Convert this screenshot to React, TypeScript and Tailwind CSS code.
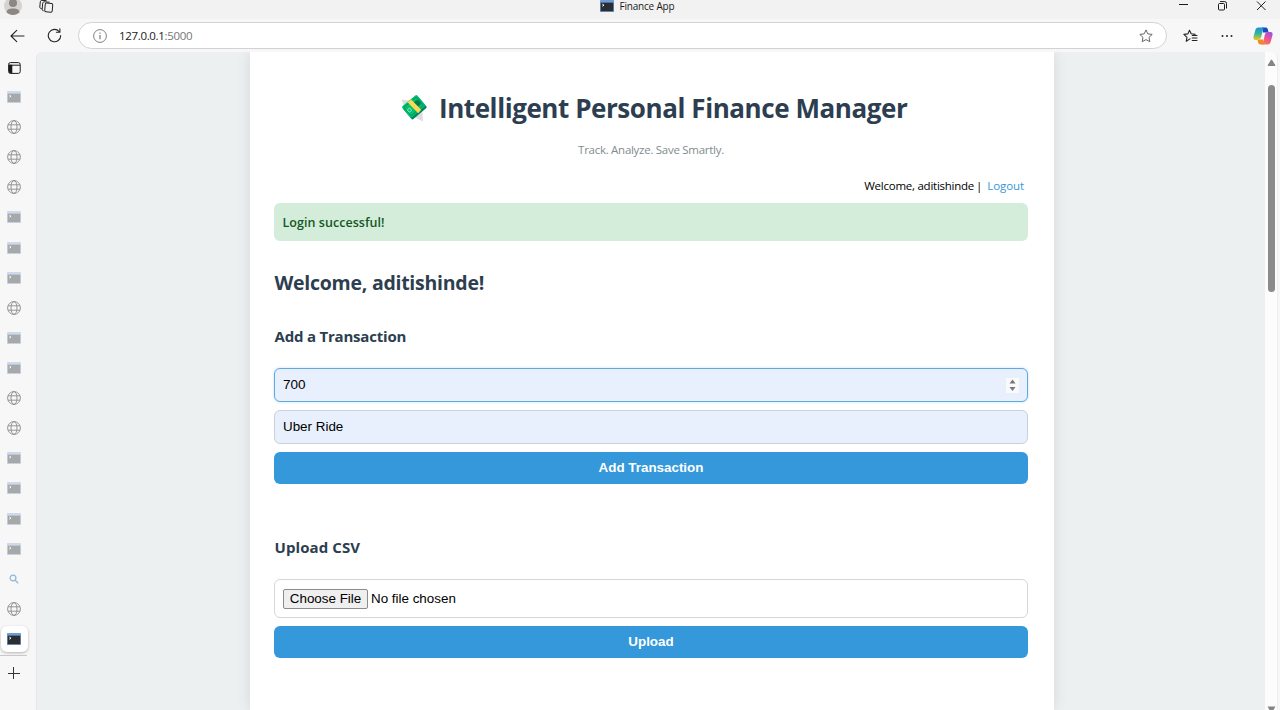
import React from "react";

type TabKind = "term" | "globe" | "search";

const tabs: TabKind[] = [
  "term", "globe", "globe", "globe", "term", "term", "term", "globe", "term",
  "term", "globe", "globe", "term", "term", "term", "term", "search", "globe",
];

function Terminal({ faded = false }: { faded?: boolean }) {
  return (
    <svg width="14" height="12" viewBox="0 0 14 12" className={faded ? "opacity-45" : ""}>
      <rect width="14" height="12" rx="0.5" fill={faded ? "#9db8e0" : "#6f9bd8"} />
      <rect x="0.7" y="2.6" width="12.6" height="8.6" fill={faded ? "#45494d" : "#2b2e31"} />
      <path d="M2.4 4.2 4 5.2 2.4 6.2" fill="none" stroke="#fff" strokeWidth="1" />
    </svg>
  );
}

function Globe() {
  return (
    <svg width="14" height="14" viewBox="0 0 14 14" fill="none" stroke="#8b8b8b" strokeWidth="0.9">
      <circle cx="7" cy="7" r="6.4" />
      <ellipse cx="7" cy="7" rx="3" ry="6.4" />
      <path d="M1 4.8h12M1 9.2h12" />
    </svg>
  );
}

function SearchGlyph() {
  return (
    <svg width="10" height="10" viewBox="0 0 10 10" fill="none" stroke="#8fb9dc" strokeWidth="1.3">
      <circle cx="4" cy="4" r="2.9" />
      <path d="M6.2 6.2 9.2 9.2" />
    </svg>
  );
}

function Money() {
  return (
    <svg width="27" height="28" viewBox="0 0 27 28">
      <path d="M.5 5.500 12 7 4 15ZM22 27.500 17 25 12 22 21 14Z" fill="#dcdde0" />
      <g transform="rotate(-40 13.5 13)">
        <rect x="3.500" y="6.500" width="19.500" height="15" rx="1.5" fill="#008463" />
        <rect x="3.500" y="4.700" width="19.500" height="14.500" rx="1.5" fill="#00c26f" />
        <rect x="5.200" y="6.500" width="16" height="11" fill="none" stroke="#00935c" strokeWidth="0.9" />
        <circle cx="18" cy="12" r="3.200" fill="#007a55" />
        <circle cx="7.600" cy="12.200" r="1.8" fill="none" stroke="#8eeab6" strokeWidth="0.9" />
      </g>
      <path d="m6.500 8.300 3.700-2.800 10 10.200-3 3.600Z" fill="#fcd953" />
    </svg>
  );
}

function Copilot() {
  return (
    <svg width="20" height="18" viewBox="0 0 20 18">
      <defs>
        <linearGradient id="cpA" x1="0" y1="0" x2="0" y2="1">
          <stop offset="0" stopColor="#1b8fe0" />
          <stop offset="0.5" stopColor="#35b79a" />
          <stop offset="1" stopColor="#f5c51c" />
        </linearGradient>
        <linearGradient id="cpB" x1="0.7" y1="0" x2="0.2" y2="1">
          <stop offset="0" stopColor="#a24fe0" />
          <stop offset="0.5" stopColor="#ee5490" />
          <stop offset="1" stopColor="#fb8045" />
        </linearGradient>
      </defs>
      <path d="M9 .6h3.900c1.100 0 1.600.8 1.900 1.800L15.600 5.500H10Z" fill="#1d49c5" />
      <path d="M11 17.400H7.100c-1.100 0-1.600-.8-1.900-1.800L4.400 12.500H10Z" fill="#f08a22" />
      <path d="M5.300.6h6.200c-1.200.3-1.400 1.400-1.700 2.500L8.300 9.800c-.5 2-1.500 3.200-3.300 3.200H2.500C.6 13 .1 11.500.6 9.600L2.300 3.200C2.800 1.500 3.700.6 5.300.6Z" fill="url(#cpA)" />
      <path d="M14.700 17.400H8.500c1.200-.3 1.400-1.400 1.700-2.500L11.700 8.200C12.200 6.200 13.200 5 15 5h2.500c1.900 0 2.400 1.500 1.900 3.400l-1.700 6.400c-.5 1.700-1.400 2.600-3 2.600Z" fill="url(#cpB)" />
    </svg>
  );
}

function Star({ list = false }: { list?: boolean }) {
  return list ? (
    <svg width="15" height="14" viewBox="0 0 15 14" fill="none" stroke="#242424" strokeWidth="1.1" strokeLinejoin="round" strokeLinecap="round">
      <path d="M7 9.900 3.200 12.300 4 8.300.9 5.400l4-.5L6.500 1.200l1.700 3.600 3.900.6M9.200 6.500h4.800M9.200 9h4.800M9.200 11.500h4.800" />
    </svg>
  ) : (
    <svg width="14" height="14" viewBox="0 0 14 14" fill="none" stroke="#686868" strokeWidth="1" strokeLinejoin="round">
      <path d="m7 .9 1.800 4 4.400.5-3.200 3 .8 4.300L7 10.600l-3.800 2.100.8-4.300-3.200-3 4.400-.5Z" />
    </svg>
  );
}

function TitleBar() {
  return (
    <div className="flex h-[19px] shrink-0 items-start justify-between bg-[#f2f2f2]">
      <div className="flex w-[200px] pl-[4px]">
        <svg width="18" height="15" viewBox="0 0 18 15">
          <circle cx="9" cy="6" r="9" fill="#d5d2cf" />
          <circle cx="9" cy="3" r="4" fill="#8b8784" />
          <path d="M2.500 12.300C3 9.500 5 8.600 9 8.600s6 .9 6.500 3.700C13.500 14.200 11.500 15 9 15s-4.500-.8-6.500-2.700Z" fill="#8b8784" />
        </svg>
        <svg className="ml-[17px]" width="15" height="13" viewBox="0 0 15 13" fill="none" stroke="#242424" strokeWidth="1" strokeLinejoin="round">
          <rect x="6" y="3.200" width="7.500" height="8.800" rx="1.400" transform="rotate(5 9.500 7.500)" />
          <path d="M4.600 10.800 3.600 10.500Q3 10.200 3.200 9.200L3.700 3.200Q3.900 1.800 5.200 1.800L10.500 2.200M2.800 8.800 1.500 8.300Q.7 7.900.8 7L1.300 1.800Q1.500.5 2.800.4L7.500.6" />
        </svg>
      </div>
      <div className="ml-[75px] flex h-[12px] w-[78px] items-center">
        <Terminal />
        <span className="ml-[6px] whitespace-nowrap font-['Open_Sans',sans-serif] text-[10px] leading-[12px] tracking-[-0.200px] text-[#1a1a1a]">Finance App</span>
      </div>
      <div className="flex w-[278px] justify-end pr-[14px]">
        <svg width="88" height="12" viewBox="0 0 88 12" fill="none" stroke="#1c1c1c" strokeWidth="1">
          <path d="M1 4.500h9" />
          <rect x="40.500" y="3.500" width="6" height="6.500" rx="1" />
          <path d="M42 1.600h4.800q1.700 0 1.700 1.700V8.500M79 1.500l8.500 8.500M87.500 1.500 79 10" />
        </svg>
      </div>
    </div>
  );
}

function Toolbar() {
  return (
    <div className="flex h-[33px] shrink-0 items-center bg-[#f7f7f7]">
      <svg className="ml-[10px]" width="15" height="14" viewBox="0 0 15 14" fill="none" stroke="#242424" strokeWidth="1.100" strokeLinecap="round" strokeLinejoin="round">
        <path d="M14 7H1M6.700 1.400 1 7l5.700 5.600" />
      </svg>
      <svg className="ml-[22px]" width="15" height="15" viewBox="0 0 15 15" fill="none" stroke="#242424" strokeWidth="1.100" strokeLinecap="round" strokeLinejoin="round">
        <path d="M13.700 7.500A6.200 6.200 0 1 1 12.200 3.500M12.900.8V4.300H9.400" />
      </svg>
      <div className="ml-[16px] flex h-[27px] w-[1089px] items-center rounded-full border border-[#d2d2d2] bg-white pl-[14px] pr-[13px]">
        <svg width="14" height="14" viewBox="0 0 14 14" fill="none" stroke="#707070" strokeWidth="0.900">
          <circle cx="7" cy="7" r="6.400" />
          <path d="M7 6v4.200M7 3.500v1.200" strokeWidth="1.100" />
        </svg>
        <span className="ml-[12px] flex-1 font-['Open_Sans',sans-serif] text-[11.500px] tracking-[-0.330px] text-[#1a1a1a]">
          127.0.0.1<span className="text-[#767676]">:5000</span>
        </span>
        <Star />
      </div>
      <div className="ml-[16px] flex"><Star list /></div>
      <svg className="ml-[23px]" width="12" height="4" viewBox="0 0 12 4" fill="#242424">
        <circle cx="1.500" cy="2" r="1" /><circle cx="6" cy="2" r="1" /><circle cx="10.500" cy="2" r="1" />
      </svg>
      <div className="ml-[20px]"><Copilot /></div>
    </div>
  );
}

function Sidebar() {
  return (
    <aside className="flex w-[36px] shrink-0 flex-col bg-[#f7f7f7]">
      <div className="flex h-[30px] items-center pt-[2px] pl-[8px]">
        <svg width="13" height="12" viewBox="0 0 13 12" fill="none" stroke="#1b1b1b" strokeWidth="1">
          <rect x="0.600" y="0.600" width="11.600" height="10.800" rx="1.800" />
          <path d="M4 3.200h8" />
          <path d="M1 2.500h3v8.700H2L1 10Z" fill="#1b1b1b" stroke="none" />
          <path d="M3.800 3v8" />
        </svg>
      </div>
      {tabs.map((kind, i) => (
        <div key={i} className="flex h-[30.120px] w-[28px] shrink-0 items-center justify-center">
          {kind === "term" ? <Terminal faded /> : kind === "globe" ? <Globe /> : <SearchGlyph />}
        </div>
      ))}
      <div className="mt-[2px] ml-[1px] flex h-[26px] w-[27px] shrink-0 items-center justify-center rounded-[6px] bg-white pr-px shadow-[0_1px_3px_rgba(0,0,0,0.28)]">
        <Terminal />
      </div>
      <div className="mt-[3px] h-px w-[27px] shrink-0 bg-[#c9c9c9]" />
      <svg className="mt-[11px] ml-[8px] shrink-0" width="12" height="12" viewBox="0 0 12 12" stroke="#333" strokeWidth="1">
        <path d="M0 6.500h12M5.500 0v12" />
      </svg>
    </aside>
  );
}

function Card() {
  return (
    <main className="flex w-[804px] shrink-0 flex-col bg-white pr-[26px] pl-[24px] font-['Open_Sans','Noto_Sans',sans-serif] shadow-[0_0_13px_rgba(0,0,0,0.1)]">
      <h1 className="mt-[36px] flex h-[40px] shrink-0 items-center pl-[127px] text-[26px] font-bold text-[#2c3e50]">
        <Money />
        <span className="ml-[11px] pt-px whitespace-nowrap tracking-[-0.430px]">Intelligent Personal Finance Manager</span>
      </h1>
      <p className="mt-[12px] h-[20px] shrink-0 text-center text-[11.500px] leading-[20px] tracking-[-0.280px] text-[#7f8c8d]">Track. Analyze. Save Smartly.</p>
      <div className="mt-[16px] flex h-[20px] shrink-0 justify-end pr-[4px] text-[11.500px] leading-[20px] text-black">
        <span className="tracking-[-0.250px]">Welcome, aditishinde</span>
        <span className="ml-[2px]">|</span>
        <a className="ml-[5px] tracking-[-0.100px] text-[#3498db]">Logout</a>
      </div>
      <div className="mt-[7px] flex h-[38px] shrink-0 items-center rounded-[6px] bg-[#d4edda] pt-[2px] pl-[8.500px] text-[12.500px] font-semibold tracking-[0.050px] text-[#155724]">Login successful!</div>
      <h2 className="mt-[27px] h-[30px] shrink-0 pl-[0.500px] text-[19.500px] font-bold leading-[30px] tracking-[-0.260px] text-[#2c3e50]">Welcome, aditishinde!</h2>
      <h3 className="mt-[28px] h-[20px] shrink-0 pl-[0.500px] text-[15px] font-bold leading-[20px] tracking-[-0.200px] text-[#2c3e50]">Add a Transaction</h3>
      <div className="mt-[22px] flex h-[34px] shrink-0 items-center justify-between rounded-[6px] border border-[#5fa9dd] bg-[#e8f0fe] pr-[8px] pl-[8px] font-['Liberation_Sans',sans-serif] text-[13.500px] text-black shadow-[0_0_3px_rgba(52,152,219,0.3)]">
        <span>700</span>
        <svg width="13" height="15" viewBox="0 0 13 15">
          <rect width="13" height="15" fill="#fafafa" />
          <path d="M3.500 5.500 6.500 1.500l3 4ZM3.500 9l3 4 3-4Z" fill="#777" />
        </svg>
      </div>
      <div className="mt-[8px] flex h-[34px] shrink-0 items-center rounded-[6px] border border-[#ccd0d8] bg-[#e8f0fe] pl-[8px] font-['Liberation_Sans',sans-serif] text-[13.400px] text-black">Uber Ride</div>
      <button className="mt-[8px] h-[32px] shrink-0 rounded-[6px] bg-[#3498db] font-['Liberation_Sans',sans-serif] text-[13.400px] font-bold text-white">Add Transaction</button>
      <h3 className="mt-[53px] h-[20px] shrink-0 pl-[0.500px] text-[15px] font-bold leading-[20px] tracking-[0.100px] text-[#2c3e50]">Upload CSV</h3>
      <div className="mt-[22px] flex h-[39px] shrink-0 items-center rounded-[6px] border border-[#d6d6d6] pt-px pl-[8px] font-['Liberation_Sans',sans-serif] text-[13.400px] text-black">
        <span className="flex h-[20px] w-[85px] items-center justify-center whitespace-nowrap rounded-[2px] border border-[#8c8c8c] bg-[#efefef]">Choose File</span>
        <span className="ml-[3px]">No file chosen</span>
      </div>
      <button className="mt-[8px] h-[32px] shrink-0 rounded-[6px] bg-[#3498db] font-['Liberation_Sans',sans-serif] text-[13.400px] font-bold text-white">Upload</button>
    </main>
  );
}

export default function App() {
  return (
    <div className="flex h-[710px] w-[1280px] flex-col overflow-hidden bg-[#f7f7f7]">
      <TitleBar />
      <Toolbar />
      <div className="flex min-h-0 flex-1">
        <Sidebar />
        <div className="flex min-w-0 flex-1 overflow-hidden rounded-tl-[6px] border-l border-[#e5e7e8] bg-[#ecf0f1] pl-[213px]">
          <Card />
        </div>
        <div className="mr-[2px] flex w-[13px] shrink-0 flex-col items-center rounded-tr-[6px] border-r border-[#eeeeee] bg-[#fcfcfc]">
          <svg className="mt-[7px] shrink-0" width="9" height="7" viewBox="0 0 9 7"><path d="M1 6.500 4.500.8 8 6.500Z" fill="#858585" stroke="#858585" strokeLinejoin="round" /></svg>
          <div className="mt-[19px] h-[207px] w-[7px] shrink-0 rounded-full bg-[#8b8b8b]" />
          <svg className="mt-auto shrink-0" width="9" height="4" viewBox="0 0 9 4"><path d="M.5.5h8L6.500 4h-4Z" fill="#858585" /></svg>
        </div>
      </div>
    </div>
  );
}
